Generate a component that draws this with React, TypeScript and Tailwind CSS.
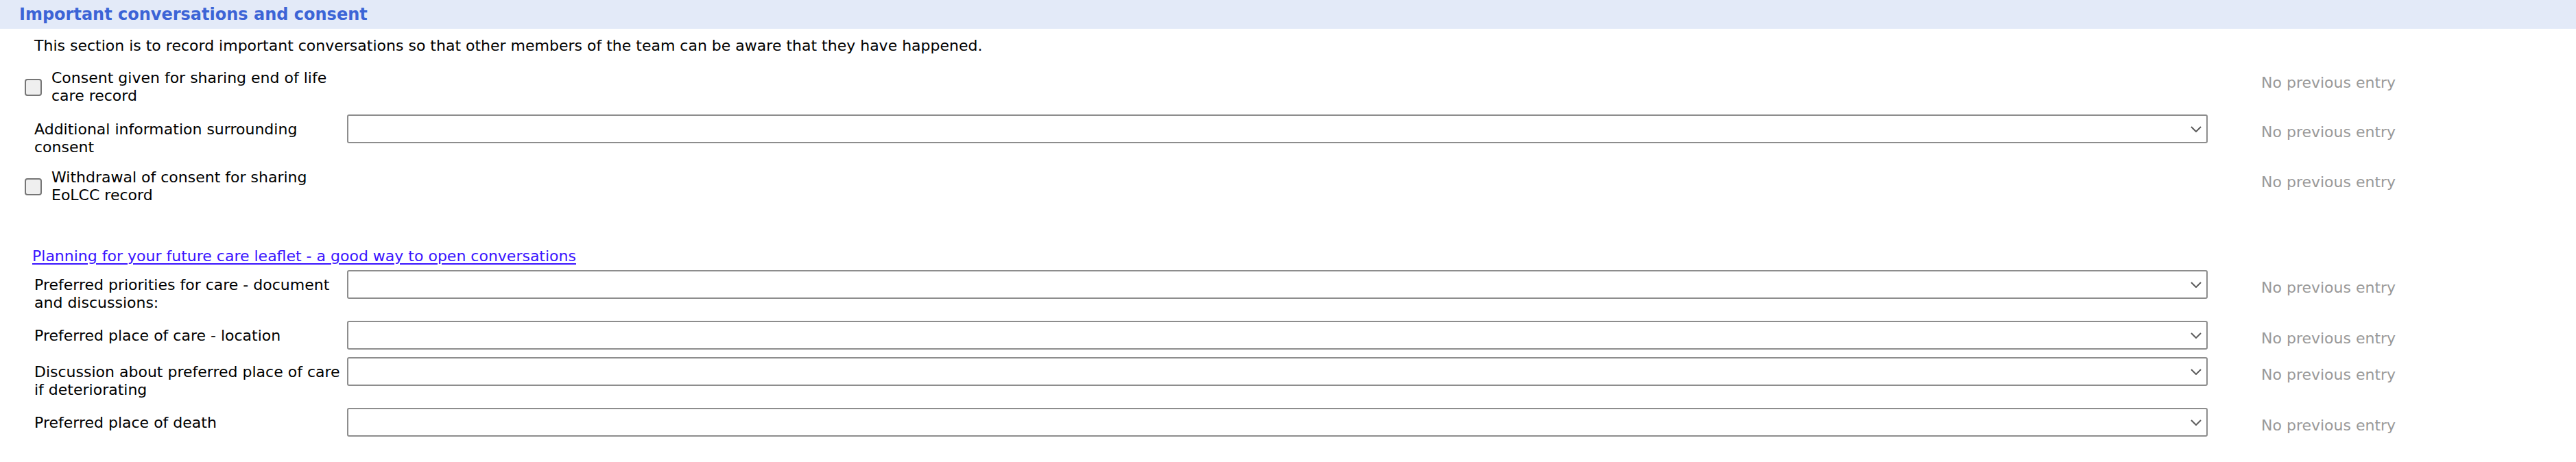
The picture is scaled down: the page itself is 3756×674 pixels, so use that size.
import React from "react";

const Chevron = () => (
  <svg width="16" height="9" viewBox="0 0 16 9" fill="none">
    <polyline points="1,1 8,8 15,1" stroke="#5c5c5c" strokeWidth="2" fill="none" />
  </svg>
);

const SelectBox = () => (
  <div className="w-[2713px] h-[42px] shrink-0 border-2 border-[#8d8d8d] rounded-[3px] bg-white flex items-center justify-end pr-[7px]">
    <Chevron />
  </div>
);

function SelectRow({ lines }: { lines: string[] }) {
  return (
    <div className="flex items-start">
      <div className="w-[506px] shrink-0 pl-[50px] pt-[9px] pb-[13px] whitespace-nowrap">
        {lines.map((l, i) => (
          <div key={i}>{l}</div>
        ))}
      </div>
      <div className="mb-[11px]">
        <SelectBox />
      </div>
      <div className="w-[78px] shrink-0" />
      <div className="pt-[13px] text-[#999999] whitespace-nowrap">No previous entry</div>
    </div>
  );
}

function CheckRow({ lines, className }: { lines: string[]; className?: string }) {
  return (
    <div className={"flex items-start " + (className ?? "")}>
      <div className="w-[506px] shrink-0 pl-[36px] flex items-center">
        <input
          type="checkbox"
          className="appearance-none w-[25px] h-[25px] shrink-0 m-0 border-2 border-[#767676] rounded-[4px] bg-[#efefef]"
        />
        <div className="ml-[14px] whitespace-nowrap">
          {lines.map((l, i) => (
            <div key={i}>{l}</div>
          ))}
        </div>
      </div>
      <div className="w-[2791px] shrink-0" />
      <div className="pt-[7px] text-[#999999] whitespace-nowrap">No previous entry</div>
    </div>
  );
}

export default function App() {
  return (
    <div className="w-full min-h-[674px] bg-white text-black font-['DejaVu_Sans',sans-serif] text-[22px] leading-[26px]">
      <div className="h-[42px] bg-[#e3eaf8] flex items-center pl-[28px]">
        <span className="font-bold text-[24px] text-[#3c64d6]">Important conversations and consent</span>
      </div>
      <div className="mt-[12px] pl-[50px]">
        This section is to record important conversations so that other members of the team can be aware that they have happened.
      </div>
      <CheckRow className="mt-[21px]" lines={["Consent given for sharing end of life", "care record"]} />
      <div className="mt-[14px]">
        <SelectRow lines={["Additional information surrounding", "consent"]} />
      </div>
      <CheckRow className="mt-[5px]" lines={["Withdrawal of consent for sharing", "EoLCC record"]} />
      <div className="mt-[63px] pl-[47px]">
        <a href="#" className="text-[#3a14ff] underline decoration-2 underline-offset-[3px]">
          Planning for your future care leaflet - a good way to open conversations
        </a>
      </div>
      <div className="mt-[7px]">
        <SelectRow lines={["Preferred priorities for care - document", "and discussions:"]} />
        <SelectRow lines={["Preferred place of care - location"]} />
        <SelectRow lines={["Discussion about preferred place of care", "if deteriorating"]} />
        <SelectRow lines={["Preferred place of death"]} />
      </div>
    </div>
  );
}
